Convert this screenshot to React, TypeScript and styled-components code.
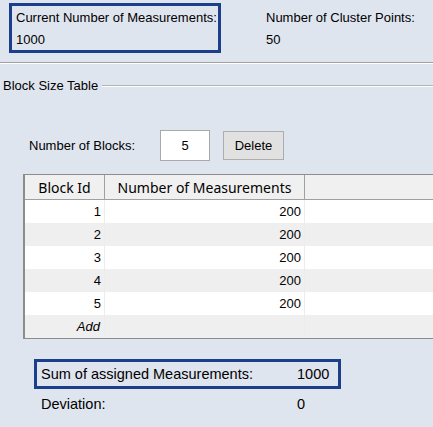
import React from "react";
import styled, { createGlobalStyle } from "styled-components";

const Global = createGlobalStyle`
  html, body { margin: 0; padding: 0; }
  body {
    background: #dfe5ef;
    font-family: "Liberation Sans", Arial, sans-serif;
    font-size: 13px;
    color: #000;
    overflow: hidden;
  }
`;

const Page = styled.div`
  width: 433px;
  height: 427px;
  display: flex;
  flex-direction: column;
`;

const TopPanel = styled.div`
  height: 62px;
  box-sizing: border-box;
  padding: 3px 0 0 9px;
  display: flex;
  align-items: flex-start;
`;

const InfoBlock = styled.div<{ $highlight?: boolean }>`
  box-sizing: border-box;
  width: ${(p) => (p.$highlight ? "212px" : "auto")};
  height: 50px;
  border: 3px solid ${(p) => (p.$highlight ? "#1b3f8b" : "transparent")};
  padding: 4px 0 0 4px;
  display: flex;
  flex-direction: column;
  gap: 7px;
  line-height: 15px;
`;

const Spacer = styled.div<{ $w: number }>`
  width: ${(p) => p.$w}px;
  flex: none;
`;

const Separator = styled.div`
  height: 1px;
  background: #a0a0a0;
  border-bottom: 1px solid #ffffff;
`;

const GroupHeader = styled.div`
  display: flex;
  align-items: center;
  gap: 4px;
  padding: 14px 0 0 3px;
  height: 15px;
  line-height: 15px;
`;

const GroupLine = styled.div`
  flex: 1;
  height: 1px;
  background: #b4b4b4;
  border-bottom: 1px solid #fff;
`;

const ControlsRow = styled.div`
  display: flex;
  align-items: center;
  padding: 37px 0 0 29px;
`;

const ControlLabel = styled.span`
  width: 131px;
`;

const NumberInput = styled.div`
  box-sizing: border-box;
  width: 50px;
  height: 31px;
  background: #fff;
  border: 1px solid #a9a9a9;
  display: flex;
  align-items: center;
  justify-content: center;
`;

const Button = styled.div`
  box-sizing: border-box;
  margin-left: 13px;
  width: 61px;
  height: 29px;
  background: #e1e1e1;
  border: 1px solid #adadad;
  display: flex;
  align-items: center;
  justify-content: center;
`;

const TableWrap = styled.div`
  margin: 13px 0 0 23px;
  width: 420px;
  box-sizing: border-box;
  border: 1px solid #8c8c8c;
  border-right: none;
  border-left-width: 2px;
  background: #f0f0f0;
`;

const HeaderRow = styled.div`
  display: grid;
  grid-template-columns: 80px 200px 1fr;
  height: 25px;
  background: #f0f0f0;
  font-family: "Noto Sans", "Open Sans", sans-serif;
  font-size: 14px;
`;

const HeaderCell = styled.div<{ $last?: boolean }>`
  display: flex;
  align-items: center;
  justify-content: center;
  border-right: ${(p) => (p.$last ? "none" : "1px solid #a0a0a0")};
  border-bottom: 1px solid #a0a0a0;
  box-sizing: border-box;
`;

const BodyRow = styled.div<{ $alt?: boolean }>`
  display: grid;
  grid-template-columns: 80px 200px 1fr;
  height: 23px;
  background: ${(p) => (p.$alt ? "#efefef" : "#ffffff")};
`;

const Cell = styled.div<{ $italic?: boolean; $last?: boolean }>`
  display: flex;
  align-items: center;
  justify-content: flex-end;
  border-right: ${(p) => (p.$last ? "none" : "1px solid #ececec")};
  font-style: ${(p) => (p.$italic ? "italic" : "normal")};
  padding-right: ${(p) => (p.$italic ? "4px" : "3px")};
  box-sizing: border-box;
`;

const SummaryArea = styled.div`
  display: flex;
  flex-direction: column;
  padding: 20px 0 0 34px;
  font-size: 14.5px;
`;

const SummaryRow = styled.div<{ $highlight?: boolean }>`
  box-sizing: border-box;
  width: 307px;
  height: 30px;
  border: 3px solid ${(p) => (p.$highlight ? "#1b3f8b" : "transparent")};
  display: flex;
  align-items: center;
  padding-left: 4px;
`;

const SummaryLabel = styled.span`
  width: 256px;
`;

const rows = [1, 2, 3, 4, 5];

export default function App() {
  return (
    <Page>
      <Global />
      <TopPanel>
        <InfoBlock $highlight>
          <span>Current Number of Measurements:</span>
          <span>1000</span>
        </InfoBlock>
        <Spacer $w={38} />
        <InfoBlock>
          <span>Number of Cluster Points:</span>
          <span>50</span>
        </InfoBlock>
      </TopPanel>
      <Separator />
      <GroupHeader>
        <span>Block Size Table</span>
        <GroupLine />
      </GroupHeader>
      <ControlsRow>
        <ControlLabel>Number of Blocks:</ControlLabel>
        <NumberInput>5</NumberInput>
        <Button>Delete</Button>
      </ControlsRow>
      <TableWrap>
        <HeaderRow>
          <HeaderCell>Block Id</HeaderCell>
          <HeaderCell>Number of Measurements</HeaderCell>
          <HeaderCell $last />
        </HeaderRow>
        {rows.map((r, i) => (
          <BodyRow key={r} $alt={i % 2 === 1}>
            <Cell>{r}</Cell>
            <Cell>200</Cell>
            <Cell $last />
          </BodyRow>
        ))}
        <BodyRow $alt>
          <Cell $italic>Add</Cell>
          <Cell />
          <Cell $last />
        </BodyRow>
      </TableWrap>
      <SummaryArea>
        <SummaryRow $highlight>
          <SummaryLabel>Sum of assigned Measurements:</SummaryLabel>
          <span>1000</span>
        </SummaryRow>
        <SummaryRow>
          <SummaryLabel>Deviation:</SummaryLabel>
          <span>0</span>
        </SummaryRow>
      </SummaryArea>
    </Page>
  );
}
